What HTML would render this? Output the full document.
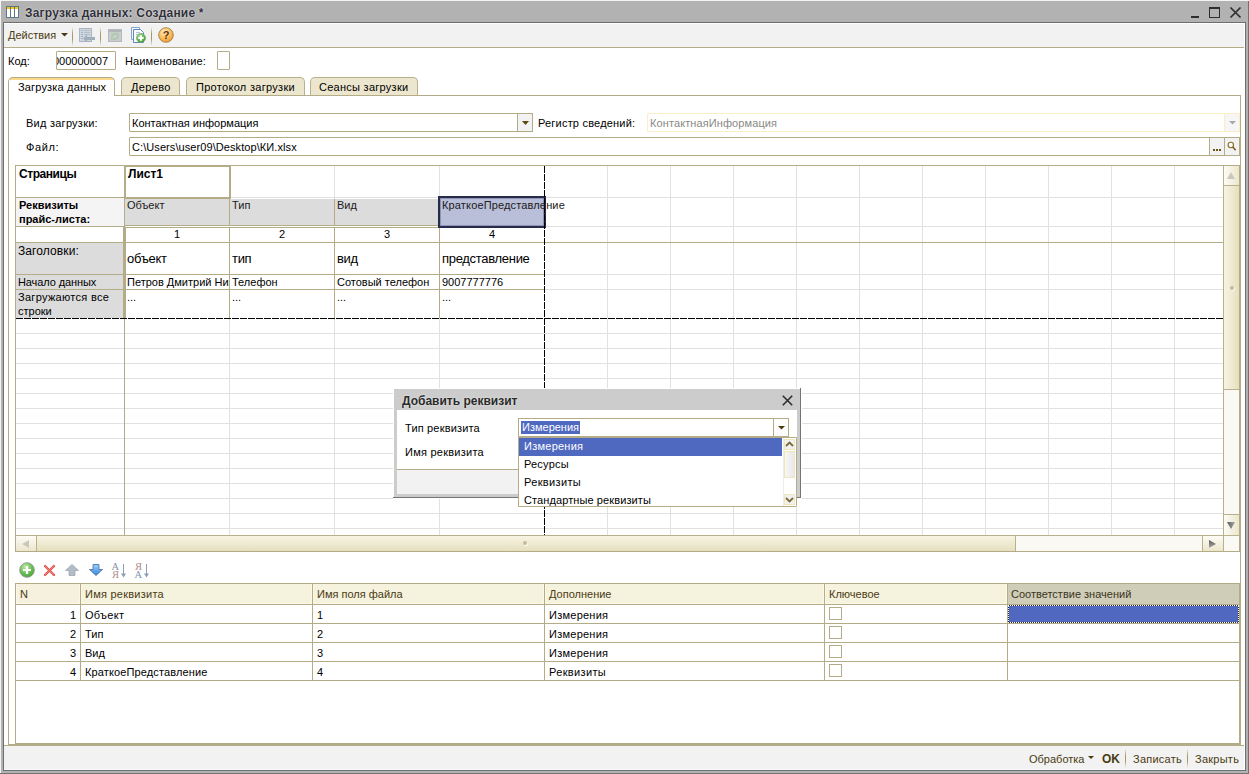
<!DOCTYPE html>
<html lang="ru"><head><meta charset="utf-8"><title>Загрузка данных: Создание *</title>
<style>
html,body{margin:0;padding:0}
body{width:1249px;height:774px;position:relative;overflow:hidden;background:#b2b2b2;font:11px "Liberation Sans",sans-serif;color:#000}
.a{position:absolute;box-sizing:border-box}
.t{position:absolute;white-space:nowrap;line-height:13px;height:13px}
.b{font-weight:bold}
.in{position:absolute;box-sizing:border-box;border:1px solid #b3ac86;background:#fff;border-radius:1px}
.br{color:#4a3a10}
.hl{position:absolute;height:1px;background:#e1e1e1}
.vl{position:absolute;width:1px;background:#e1e1e1}
.bg{background:#b3ac86}
</style></head><body>
<!-- window frame -->
<div class="a" style="left:0;top:0;width:1249px;height:1px;background:#f4f4f4"></div>
<div class="a" style="left:0;top:0;width:1px;height:773px;background:#f4f4f4"></div>
<div class="a" style="left:1248px;top:1px;width:1px;height:773px;background:#727272"></div>
<div class="a" style="left:0;top:773px;width:1249px;height:1px;background:#727272"></div>
<div class="a" style="left:3px;top:22px;width:1243px;height:749px;background:#6e6e6e"></div>
<!-- client area -->
<div class="a" id="client" style="left:4px;top:23px;width:1241px;height:747px;background:#fff"></div>
<!-- title -->
<svg class="a" style="left:6px;top:6px" width="14" height="12" viewBox="0 0 14 12"><g fill="#fff" stroke="#5f7686" stroke-width="1"><rect x=".5" y=".5" width="4" height="11"/><rect x="4.5" y=".5" width="4" height="11"/><rect x="8.5" y=".5" width="4" height="11"/></g><g fill="#f5c518"><rect x="1" y="1" width="3" height="2"/><rect x="5" y="1" width="3" height="2"/><rect x="9" y="1" width="3" height="2"/></g></svg>
<div class="t b" style="left:25px;top:6px;font-size:12px;line-height:14px;height:14px;color:#30303a;letter-spacing:.2px;text-shadow:0 0 2px #e4e4e4,0 0 1px #e4e4e4">Загрузка данных: Создание *</div>
<div class="a" style="left:1191px;top:16px;width:8px;height:2px;background:#2e2e2e"></div>
<div class="a" style="left:1209px;top:7px;width:11px;height:11px;border:1px solid #2e2e2e;border-top-width:2px"></div>
<svg class="a" style="left:1229px;top:6px" width="13" height="13" viewBox="0 0 13 13"><path d="M1.5 1.5 L11.5 11.5 M11.5 1.5 L1.5 11.5" stroke="#2e2e2e" stroke-width="1.7" fill="none"/></svg>
<!-- toolbar -->
<div class="a" style="left:4px;top:23px;width:1240px;height:24px;background:#f2f2f2;border-top:1px solid #fff"></div>
<div class="a bg" style="left:4px;top:47px;width:1240px;height:1px"></div>
<div class="t br" style="left:8px;top:29px">Действия</div>
<svg class="a" style="left:61px;top:33px" width="7" height="4"><path d="M0 0h7L3.5 3.6z" fill="#4a3a10"/></svg>
<div class="a" style="left:72px;top:27px;width:1px;height:19px;background:linear-gradient(#f2f2f200,#a89a62 35%,#a89a62 65%,#f2f2f200)"></div>
<div class="a" style="left:100px;top:27px;width:1px;height:19px;background:linear-gradient(#f2f2f200,#a89a62 35%,#a89a62 65%,#f2f2f200)"></div>
<div class="a" style="left:151px;top:27px;width:1px;height:19px;background:linear-gradient(#f2f2f200,#a89a62 35%,#a89a62 65%,#f2f2f200)"></div>
<!-- icon1 -->
<svg class="a" style="left:79px;top:28px" width="17" height="15" viewBox="0 0 17 15"><rect x=".5" y=".5" width="12" height="13" fill="#cfd6dd" stroke="#aab5c0"/><path d="M2 2.5h2M2 4.5h2M2 6.5h2M2 8.5h2M2 10.5h2" stroke="#9fb6cf" stroke-width="1"/><path d="M5 2.5h6M5 4.5h6M5 6.5h6" stroke="#b4bec8" stroke-width="1"/><path d="M4 10.5l4-3.8v2.4h8v2.8H8v2.4z" fill="#a0aebb"/></svg>
<!-- icon2 -->
<svg class="a" style="left:108px;top:29px" width="15" height="13" viewBox="0 0 15 13"><rect x=".5" y=".5" width="13" height="12" fill="#cacdce" stroke="#b4b9bc"/><rect x="1" y="1" width="12" height="2" fill="#b0b5b9"/><path d="M4 8a3 3 0 0 1 5-2.4M10 7a3 3 0 0 1-5 2.4" fill="none" stroke="#a9c6a2" stroke-width="1.5"/><path d="M8.5 4.5h2.5v2.5zM5.5 10.5H3V8z" fill="#a9c6a2"/></svg>
<!-- icon3 -->
<svg class="a" style="left:130px;top:26px" width="17" height="18" viewBox="0 0 17 18"><defs><radialGradient id="g3" cx=".35" cy=".3" r=".8"><stop offset="0" stop-color="#a4e090"/><stop offset=".6" stop-color="#5cba48"/><stop offset="1" stop-color="#3c962e"/></radialGradient></defs><path d="M1.5 1.5h8v12h-8z" fill="#f4f8fc" stroke="#86a6cc"/><path d="M3.5 3.5h7l3 3v10h-10z" fill="#fbfdff" stroke="#5f88b8"/><path d="M6 6.5h4M6 8.5h3" stroke="#b8c4d0"/><circle cx="11" cy="12" r="4.5" fill="url(#g3)" stroke="#7f9a7a" stroke-width=".7"/><path d="M11 9.3v5.4M8.3 12h5.4" stroke="#fff" stroke-width="1.9"/></svg>
<!-- icon4 -->
<svg class="a" style="left:158px;top:27px" width="16" height="16" viewBox="0 0 16 16"><defs><radialGradient id="hg" cx=".4" cy=".3" r=".8"><stop offset="0" stop-color="#ffebbf"/><stop offset=".55" stop-color="#fbbd58"/><stop offset="1" stop-color="#e8922a"/></radialGradient></defs><circle cx="8" cy="8" r="7.3" fill="url(#hg)" stroke="#a87c48" stroke-width=".9"/><text x="8" y="12" text-anchor="middle" font-family="Liberation Sans, sans-serif" font-weight="bold" font-size="11" fill="#5e3210">?</text></svg>
<!-- code row -->
<div class="t" style="left:8px;top:55px">Код:</div>
<div class="in" style="left:56px;top:51px;width:60px;height:19px;overflow:hidden"><div class="t" style="right:7px;top:3px">000000007</div></div>
<div class="t" style="left:125px;top:55px;letter-spacing:0.12px">Наименование:</div>
<div class="in" style="left:217px;top:51px;width:13px;height:19px"></div>
<!-- tabs -->
<div class="a" style="left:8px;top:95px;width:1233px;height:650px;border:1px solid #b3ac86;background:#fff"></div>
<div class="a" style="left:121px;top:77px;width:59px;height:19px;border:1px solid #b9b18c;border-bottom:1px solid #b3ac86;border-radius:5px 5px 0 0;background:#ece6cf"></div>
<div class="a" style="left:186px;top:77px;width:119px;height:19px;border:1px solid #b9b18c;border-bottom:1px solid #b3ac86;border-radius:5px 5px 0 0;background:#ece6cf"></div>
<div class="a" style="left:310px;top:77px;width:108px;height:19px;border:1px solid #b9b18c;border-bottom:1px solid #b3ac86;border-radius:5px 5px 0 0;background:#ece6cf"></div>
<div class="a" style="left:8px;top:77px;width:107px;height:19px;border:1px solid #b3ac86;border-bottom:none;border-radius:5px 5px 0 0;background:linear-gradient(#fbd98a 0 2px,#fff 2px);overflow:hidden"></div>
<div class="t" style="left:18px;top:81px;letter-spacing:0.17px">Загрузка данных</div>
<div class="t" style="left:131px;top:81px;letter-spacing:0.35px">Дерево</div>
<div class="t" style="left:196px;top:81px;letter-spacing:0.3px">Протокол загрузки</div>
<div class="t" style="left:319px;top:81px;letter-spacing:0.27px">Сеансы загрузки</div>
<!-- fields -->
<div class="t" style="left:26px;top:117px;letter-spacing:0.25px">Вид загрузки:</div>
<div class="in" style="left:129px;top:113px;width:404px;height:19px"></div>
<div class="t" style="left:132px;top:117px">Контактная информация</div>
<div class="a" style="left:517px;top:113px;width:16px;height:19px;border:1px solid #b3ac86;background:#f2f2f2"></div>
<svg class="a" style="left:522px;top:121px" width="7" height="4"><path d="M0 0h7L3.5 4z" fill="#5e4a12"/></svg>
<div class="t" style="left:538px;top:117px;letter-spacing:0.2px">Регистр сведений:</div>
<div class="in" style="left:647px;top:113px;width:593px;height:19px;border-color:#fbeec4"></div>
<div class="t" style="left:650px;top:117px;color:#8a8a84;letter-spacing:0.1px">КонтактнаяИнформация</div>
<div class="a" style="left:1224px;top:113px;width:16px;height:19px;border:1px solid #fbeec4;background:#f6f6f6"></div>
<svg class="a" style="left:1229px;top:121px" width="7" height="4"><path d="M0 0h7L3.5 3.6z" fill="#a8a8a8"/></svg>
<div class="t" style="left:26px;top:141px;letter-spacing:0.6px">Файл:</div>
<div class="in" style="left:129px;top:137px;width:1111px;height:19px"></div>
<div class="t" style="left:132px;top:141px;letter-spacing:0.08px">C:\Users\user09\Desktop\КИ.xlsx</div>
<div class="a" style="left:1209px;top:137px;width:16px;height:19px;border:1px solid #b3ac86;background:#f2f2f2"></div>
<div class="t br" style="left:1213px;top:141px;width:9px;overflow:hidden;color:transparent;background:linear-gradient(90deg,#6a5416 0 2px,transparent 2px 3px,#6a5416 3px 5px,transparent 5px 6px,#6a5416 6px 8px,transparent 8px) 0 8px/9px 2px no-repeat">...</div>
<div class="a" style="left:1224px;top:137px;width:16px;height:19px;border:1px solid #b3ac86;background:#f2f2f2"></div>
<svg class="a" style="left:1227px;top:141px" width="11" height="11" viewBox="0 0 11 11"><circle cx="3.8" cy="4" r="2.7" fill="#fdfdfd" stroke="#8a6d2a" stroke-width="1.1"/><path d="M5.8 6L8.6 9.2" stroke="#7a5c1c" stroke-width="1.6"/></svg>
<div class="a" style="left:15px;top:165px;width:1225px;height:387px;border:1px solid #b3ac86;background:#fff"></div>
<div class="hl" style="left:16px;top:197px;width:1208px"></div>
<div class="hl" style="left:16px;top:226px;width:1208px"></div>
<div class="hl" style="left:16px;top:274px;width:1208px"></div>
<div class="hl" style="left:16px;top:289px;width:1208px"></div>
<div class="hl" style="left:16px;top:333px;width:1208px"></div>
<div class="hl" style="left:16px;top:348px;width:1208px"></div>
<div class="hl" style="left:16px;top:363px;width:1208px"></div>
<div class="hl" style="left:16px;top:378px;width:1208px"></div>
<div class="hl" style="left:16px;top:393px;width:1208px"></div>
<div class="hl" style="left:16px;top:408px;width:1208px"></div>
<div class="hl" style="left:16px;top:423px;width:1208px"></div>
<div class="hl" style="left:16px;top:438px;width:1208px"></div>
<div class="hl" style="left:16px;top:453px;width:1208px"></div>
<div class="hl" style="left:16px;top:468px;width:1208px"></div>
<div class="hl" style="left:16px;top:483px;width:1208px"></div>
<div class="hl" style="left:16px;top:498px;width:1208px"></div>
<div class="hl" style="left:16px;top:513px;width:1208px"></div>
<div class="hl" style="left:16px;top:528px;width:1208px"></div>
<div class="vl" style="left:229px;top:166px;height:369px"></div>
<div class="vl" style="left:334px;top:166px;height:369px"></div>
<div class="vl" style="left:439px;top:166px;height:369px"></div>
<div class="vl" style="left:607px;top:166px;height:369px"></div>
<div class="vl" style="left:670px;top:166px;height:369px"></div>
<div class="vl" style="left:733px;top:166px;height:369px"></div>
<div class="vl" style="left:796px;top:166px;height:369px"></div>
<div class="vl" style="left:859px;top:166px;height:369px"></div>
<div class="vl" style="left:922px;top:166px;height:369px"></div>
<div class="vl" style="left:985px;top:166px;height:369px"></div>
<div class="vl" style="left:1048px;top:166px;height:369px"></div>
<div class="vl" style="left:1111px;top:166px;height:369px"></div>
<div class="vl" style="left:1174px;top:166px;height:369px"></div>
<div class="a" style="left:16px;top:198px;width:108px;height:28px;background:#f4f4f4"></div>
<div class="a" style="left:16px;top:243px;width:108px;height:31px;background:#dcdcdc"></div>
<div class="a" style="left:16px;top:275px;width:108px;height:14px;background:#dcdcdc"></div>
<div class="a" style="left:16px;top:290px;width:108px;height:28px;background:#dcdcdc"></div>
<div class="a" style="left:16px;top:197px;width:108px;height:1px;background:#b3ac86"></div>
<div class="a" style="left:16px;top:226px;width:108px;height:1px;background:#b3ac86"></div>
<div class="a" style="left:16px;top:242px;width:108px;height:1px;background:#b3ac86"></div>
<div class="a" style="left:16px;top:274px;width:108px;height:1px;background:#b3ac86"></div>
<div class="a" style="left:16px;top:289px;width:108px;height:1px;background:#b3ac86"></div>
<div class="a" style="left:125px;top:199px;width:419px;height:26px;background:#dcdcdc"></div>
<div class="a" style="left:124px;top:225px;width:420px;height:1px;background:#b3ac86"></div>
<div class="a" style="left:124px;top:227px;width:420px;height:1px;background:#b3ac86"></div>
<div class="a" style="left:124px;top:274px;width:420px;height:1px;background:#b3ac86"></div>
<div class="a" style="left:124px;top:289px;width:420px;height:1px;background:#b3ac86"></div>
<div class="a" style="left:16px;top:242px;width:1208px;height:1px;background:#b3ac86"></div>
<div class="a" style="left:229px;top:199px;width:1px;height:119px;background:#b3ac86"></div>
<div class="a" style="left:334px;top:199px;width:1px;height:119px;background:#b3ac86"></div>
<div class="a" style="left:439px;top:199px;width:1px;height:119px;background:#b3ac86"></div>
<div class="a" style="left:126px;top:226px;width:418px;height:1px;background:#fff"></div>
<div class="a" style="left:124px;top:166px;width:1px;height:369px;background:#b3ac86"></div>
<div class="a" style="left:123px;top:227px;width:3px;height:91px;background:#b3ac86"></div>
<div class="a" style="left:124px;top:165px;width:107px;height:34px;border:2px solid #b3ac86;background:#fff"></div>
<div class="a" style="left:438px;top:196px;width:108px;height:32px;border:2px solid #262c4a;background:#b9bed9;box-shadow:inset 0 0 0 1px #8d93b0"></div>
<div class="a" style="left:16px;top:318px;width:1208px;height:1px;background:repeating-linear-gradient(90deg,#000 0 7px,transparent 7px 8px)"></div>
<div class="a" style="left:544px;top:166px;width:1px;height:369px;background:repeating-linear-gradient(180deg,#000 0 7px,transparent 7px 8px)"></div>
<div class="t b" style="left:19px;top:167px;font-size:12px;line-height:14px;height:14px;letter-spacing:-.45px">Страницы</div>
<div class="t b" style="left:128px;top:167px;font-size:12px;line-height:14px;height:14px">Лист1</div>
<div class="t b" style="left:19px;top:199px;letter-spacing:0">Реквизиты</div>
<div class="t b" style="left:19px;top:213px;">прайс-листа:</div>
<div class="t" style="left:127px;top:199px;color:#202020;letter-spacing:0">Объект</div>
<div class="t" style="left:232px;top:199px;color:#202020;letter-spacing:0">Тип</div>
<div class="t" style="left:337px;top:199px;color:#202020;letter-spacing:0">Вид</div>
<div class="t" style="left:442px;top:199px;color:#202020;letter-spacing:.15px">КраткоеПредставление</div>
<div class="t" style="left:125px;top:228px;width:104px;text-align:center">1</div>
<div class="t" style="left:230px;top:228px;width:104px;text-align:center">2</div>
<div class="t" style="left:335px;top:228px;width:104px;text-align:center">3</div>
<div class="t" style="left:440px;top:228px;width:104px;text-align:center">4</div>
<div class="t" style="left:18px;top:244px;font-size:12px;line-height:14px;height:14px;letter-spacing:.1px">Заголовки:</div>
<div class="t" style="left:127px;top:251px;font-size:13px;line-height:15px;height:15px;letter-spacing:-.3px">объект</div>
<div class="t" style="left:232px;top:251px;font-size:13px;line-height:15px;height:15px;letter-spacing:-.3px">тип</div>
<div class="t" style="left:337px;top:251px;font-size:13px;line-height:15px;height:15px;letter-spacing:-.3px">вид</div>
<div class="t" style="left:442px;top:251px;font-size:13px;line-height:15px;height:15px;letter-spacing:-.3px">представление</div>
<div class="t" style="left:18px;top:276px;letter-spacing:-.1px">Начало данных</div>
<div class="t" style="left:127px;top:276px;width:102px;overflow:hidden">Петров Дмитрий Николаевич</div>
<div class="t" style="left:232px;top:276px;width:102px;overflow:hidden">Телефон</div>
<div class="t" style="left:337px;top:276px;width:102px;overflow:hidden">Сотовый телефон</div>
<div class="t" style="left:442px;top:276px;width:102px;overflow:hidden">9007777776</div>
<div class="t" style="left:18px;top:291px;letter-spacing:.3px">Загружаются все</div>
<div class="t" style="left:18px;top:305px;">строки</div>
<div class="t" style="left:127px;top:291px;">...</div>
<div class="t" style="left:232px;top:291px;">...</div>
<div class="t" style="left:337px;top:291px;">...</div>
<div class="t" style="left:442px;top:291px;">...</div>
<div class="a" style="left:1223px;top:166px;width:16px;height:369px;background:#faf9f4;border-left:1px solid #b9b18c"></div>
<div class="a" style="left:1224px;top:166px;width:15px;height:20px;background:linear-gradient(90deg,#fdfcf6,#ece6cc);border-bottom:1px solid #b9b18c"></div>
<div class="a" style="left:1224px;top:186px;width:15px;height:204px;background:linear-gradient(90deg,#f7f4e4,#e6dfbe);border-bottom:1px solid #b9b18c"></div>
<div class="a" style="left:1224px;top:514px;width:15px;height:21px;background:linear-gradient(90deg,#fdfcf6,#ece6cc);border-top:1px solid #b9b18c"></div>
<svg class="a" style="left:1227px;top:172px" width="8" height="7"><path d="M4 0L8 7H0z" fill="#c9c8c0"/></svg>
<svg class="a" style="left:1227px;top:522px" width="8" height="7"><defs><linearGradient id="tg1" x1="0" x2="1"><stop offset="0" stop-color="#5a5a5a"/><stop offset="1" stop-color="#a8a8a8"/></linearGradient></defs><path d="M0 0h8L4 7z" fill="url(#tg1)"/></svg>
<div class="a" style="left:16px;top:535px;width:1223px;height:16px;background:#faf9f4;border-top:1px solid #b9b18c"></div>
<div class="a" style="left:16px;top:536px;width:21px;height:15px;border-right:1px solid #b9b18c;background:linear-gradient(180deg,#fdfcf6,#ece6cc)"></div>
<div class="a" style="left:37px;top:536px;width:979px;height:15px;background:linear-gradient(180deg,#f7f4e4,#e6dfbe);border-right:1px solid #b9b18c"></div>
<div class="a" style="left:1202px;top:536px;width:22px;height:15px;background:linear-gradient(180deg,#fdfcf6,#ece6cc);border-left:1px solid #b9b18c;border-right:1px solid #b9b18c"></div>
<svg class="a" style="left:22px;top:540px" width="7" height="8"><path d="M7 0v8L0 4z" fill="#c9c8c0"/></svg>
<svg class="a" style="left:1209px;top:540px" width="7" height="8"><defs><linearGradient id="tg2" x1="0" x2="0" y1="0" y2="1"><stop offset="0" stop-color="#5a5a5a"/><stop offset="1" stop-color="#a8a8a8"/></linearGradient></defs><path d="M0 0v8L7 4z" fill="url(#tg2)"/></svg>
<div class="a" style="left:523px;top:541px;width:4px;height:4px;border-radius:2px;background:#c4bc9c;box-shadow:1px 1px 0 #fbf9ee"></div>
<div class="a" style="left:1230px;top:286px;width:4px;height:4px;border-radius:2px;background:#c4bc9c;box-shadow:1px 1px 0 #fbf9ee"></div>
<svg class="a" style="left:19px;top:562px" width="16" height="16" viewBox="0 0 16 16"><defs><radialGradient id="gp" cx=".4" cy=".3" r=".8"><stop offset="0" stop-color="#c4eaae"/><stop offset=".55" stop-color="#68bf52"/><stop offset="1" stop-color="#4a9a3c"/></radialGradient></defs><circle cx="8" cy="8" r="7.3" fill="url(#gp)" stroke="#8a9a84" stroke-width=".9"/><path d="M8 4v8M4 8h8" stroke="#fff" stroke-width="2.2"/></svg>
<svg class="a" style="left:43px;top:564px" width="13" height="13" viewBox="0 0 13 13"><path d="M2 2L11 11M11 2L2 11" stroke="#e2504a" stroke-width="2.4" stroke-linecap="round"/><path d="M2 2L11 11M11 2L2 11" stroke="#f08078" stroke-width="1" stroke-linecap="round"/></svg>
<svg class="a" style="left:65px;top:564px" width="14" height="12" viewBox="0 0 14 12"><path d="M7 .5L13.5 6.5H10V11.5H4V6.5H.5z" fill="#b4bcc6" stroke="#a0a8b2" stroke-width=".8"/></svg>
<svg class="a" style="left:89px;top:564px" width="14" height="12" viewBox="0 0 14 12"><defs><linearGradient id="bd" x1="0" y1="0" x2="0" y2="1"><stop offset="0" stop-color="#9cd0f8"/><stop offset="1" stop-color="#3a84d8"/></linearGradient></defs><path d="M4 .5H10V5.5H13.5L7 11.5L.5 5.5H4z" fill="url(#bd)" stroke="#3a6cb0" stroke-width=".8"/></svg>
<svg class="a" style="left:111px;top:561px" width="17" height="18" viewBox="0 0 17 18"><text x="0.5" y="8.5" font-family="Liberation Serif, serif" font-size="10.5" fill="#7f94ab">А</text><text x="1" y="17" font-family="Liberation Serif, serif" font-size="10.5" fill="#ab8c8c">Я</text><path d="M12.5 3v11" stroke="#8a9db2" stroke-width="1"/><path d="M10 12.5h5l-2.5 4z" fill="#8a9db2"/></svg>
<svg class="a" style="left:134px;top:561px" width="17" height="18" viewBox="0 0 17 18"><text x="1" y="8.5" font-family="Liberation Serif, serif" font-size="10.5" fill="#ab8c8c">Я</text><text x="0.5" y="17" font-family="Liberation Serif, serif" font-size="10.5" fill="#7f94ab">А</text><path d="M12.5 3v11" stroke="#8a9db2" stroke-width="1"/><path d="M10 12.5h5l-2.5 4z" fill="#8a9db2"/></svg>
<div class="a" style="left:15px;top:583px;width:1225px;height:161px;border:1px solid #b3ac86;background:#fff"></div>
<div class="a" style="left:16px;top:584px;width:64px;height:20px;background:#f6f0de;box-shadow:inset 1px 0 #fbf8e8,inset -1px 0 #fbf8e8,inset 0 -1px #fbf8e8"></div>
<div class="a" style="left:81px;top:584px;width:231px;height:20px;background:#f5f2de;box-shadow:inset 1px 0 #fbf8e8,inset -1px 0 #fbf8e8,inset 0 -1px #fbf8e8"></div>
<div class="a" style="left:313px;top:584px;width:231px;height:20px;background:#f5f2de;box-shadow:inset 1px 0 #fbf8e8,inset -1px 0 #fbf8e8,inset 0 -1px #fbf8e8"></div>
<div class="a" style="left:545px;top:584px;width:279px;height:20px;background:#f5f2de;box-shadow:inset 1px 0 #fbf8e8,inset -1px 0 #fbf8e8,inset 0 -1px #fbf8e8"></div>
<div class="a" style="left:825px;top:584px;width:182px;height:20px;background:#f5f2de;box-shadow:inset 1px 0 #fbf8e8,inset -1px 0 #fbf8e8,inset 0 -1px #fbf8e8"></div>
<div class="a" style="left:1008px;top:584px;width:231px;height:20px;background:#cfcdb8"></div>
<div class="a" style="left:16px;top:604px;width:1223px;height:1px;background:#b3ac86"></div>
<div class="a" style="left:16px;top:623px;width:1223px;height:1px;background:#b3ac86"></div>
<div class="a" style="left:16px;top:642px;width:1223px;height:1px;background:#b3ac86"></div>
<div class="a" style="left:16px;top:661px;width:1223px;height:1px;background:#b3ac86"></div>
<div class="a" style="left:16px;top:680px;width:1223px;height:1px;background:#b3ac86"></div>
<div class="a" style="left:80px;top:584px;width:1px;height:97px;background:#b3ac86"></div>
<div class="a" style="left:312px;top:584px;width:1px;height:97px;background:#b3ac86"></div>
<div class="a" style="left:544px;top:584px;width:1px;height:97px;background:#b3ac86"></div>
<div class="a" style="left:824px;top:584px;width:1px;height:97px;background:#b3ac86"></div>
<div class="a" style="left:1007px;top:584px;width:1px;height:97px;background:#b3ac86"></div>
<div class="t" style="left:20px;top:588px;color:#4a3a12">N</div>
<div class="t" style="left:85px;top:588px;color:#4a3a12;letter-spacing:0.25px">Имя реквизита</div>
<div class="t" style="left:317px;top:588px;color:#4a3a12">Имя поля файла</div>
<div class="t" style="left:549px;top:588px;color:#4a3a12">Дополнение</div>
<div class="t" style="left:829px;top:588px;color:#4a3a12">Ключевое</div>
<div class="t" style="left:1011px;top:588px;color:#3a3420">Соответствие значений</div>
<div class="t" style="left:16px;top:609px;width:60px;text-align:right">1</div>
<div class="t" style="left:85px;top:609px;letter-spacing:0.3px">Объект</div>
<div class="t" style="left:317px;top:609px;">1</div>
<div class="t" style="left:549px;top:609px;letter-spacing:0.25px">Измерения</div>
<div class="a" style="left:829px;top:607px;width:13px;height:13px;border:1px solid #b3ac86;background:#fff"></div>
<div class="t" style="left:16px;top:628px;width:60px;text-align:right">2</div>
<div class="t" style="left:85px;top:628px;">Тип</div>
<div class="t" style="left:317px;top:628px;">2</div>
<div class="t" style="left:549px;top:628px;letter-spacing:0.25px">Измерения</div>
<div class="a" style="left:829px;top:626px;width:13px;height:13px;border:1px solid #b3ac86;background:#fff"></div>
<div class="t" style="left:16px;top:647px;width:60px;text-align:right">3</div>
<div class="t" style="left:85px;top:647px;">Вид</div>
<div class="t" style="left:317px;top:647px;">3</div>
<div class="t" style="left:549px;top:647px;letter-spacing:0.25px">Измерения</div>
<div class="a" style="left:829px;top:645px;width:13px;height:13px;border:1px solid #b3ac86;background:#fff"></div>
<div class="t" style="left:16px;top:666px;width:60px;text-align:right">4</div>
<div class="t" style="left:85px;top:666px;letter-spacing:0.13px">КраткоеПредставление</div>
<div class="t" style="left:317px;top:666px;">4</div>
<div class="t" style="left:549px;top:666px;letter-spacing:0.35px">Реквизиты</div>
<div class="a" style="left:829px;top:664px;width:13px;height:13px;border:1px solid #b3ac86;background:#fff"></div>
<div class="a" style="left:1008px;top:605px;width:231px;height:18px;background:#2a2a2a"></div>
<div class="a" style="left:1009px;top:606px;width:229px;height:16px;background:#5068c0"></div>
<div class="a" style="left:1008px;top:605px;width:231px;height:18px;border:1px dotted #fff"></div>
<div class="a" style="left:393px;top:388px;width:409px;height:111px;background:#fff"></div>
<div class="a" style="left:394px;top:389px;width:407px;height:109px;background:#cccccc;border-right:1px solid #757575;border-bottom:1px solid #757575"></div>
<div class="a" style="left:393px;top:497px;width:1px;height:1px;background:#757575"></div>
<div class="a" style="left:800px;top:388px;width:1px;height:1px;background:#757575"></div>
<div class="a" style="left:397px;top:410px;width:400px;height:59px;background:#fff"></div>
<div class="a" style="left:397px;top:469px;width:400px;height:25px;background:#f2f2f2;border-top:1px solid #b3ac86"></div>
<div class="t b" style="left:402px;top:394px;font-size:12px;line-height:14px;height:14px;color:#2a2a2a;text-shadow:0 0 2px #f4f4f4">Добавить реквизит</div>
<svg class="a" style="left:782px;top:395px" width="11" height="11" viewBox="0 0 11 11"><path d="M.8 .8L10.2 10.2M10.2 .8L.8 10.2" stroke="#2e2e2e" stroke-width="1.6"/></svg>
<div class="t" style="left:405px;top:422px;letter-spacing:0.17px">Тип реквизита</div>
<div class="t" style="left:405px;top:446px;letter-spacing:0.25px">Имя реквизита</div>
<div class="a" style="left:518px;top:418px;width:271px;height:19px;border:1px solid #b3ac86;background:#fff"></div>
<div class="t" style="left:521px;top:421px;color:#fff;background:#4f68c0;padding:0 1px 0 1px;letter-spacing:0">Измерения</div>
<div class="a" style="left:773px;top:418px;width:16px;height:19px;border:1px solid #b3ac86;background:#fdfdfd"></div>
<svg class="a" style="left:778px;top:426px" width="7" height="4"><path d="M0 0h7L3.5 3.6z" fill="#4a3a10"/></svg>
<div class="a" style="left:518px;top:437px;width:279px;height:70px;border:1px solid #b3ac86;background:#fff;overflow:hidden;border-radius:0 0 2px 0"></div>
<div class="a" style="left:519px;top:438px;width:263px;height:18px;background:#4f68c0"></div>
<div class="t" style="left:524px;top:440px;color:#fff;letter-spacing:0.25px">Измерения</div>
<div class="t" style="left:524px;top:458px;letter-spacing:0.2px">Ресурсы</div>
<div class="t" style="left:524px;top:476px;letter-spacing:0.35px">Реквизиты</div>
<div class="a" style="left:519px;top:492px;width:264px;height:14px;overflow:hidden"><div class="t" style="left:5px;top:2px;letter-spacing:0.1px">Стандартные реквизиты</div></div>
<div class="a" style="left:783px;top:438px;width:13px;height:68px;background:#fff;border-left:1px solid #ececec"></div>
<div class="a" style="left:784px;top:439px;width:11px;height:11px;border:1px solid #f0e6b8;background:#f1f1f1"></div>
<div class="a" style="left:784px;top:494px;width:11px;height:11px;border:1px solid #f0e6b8;background:#f1f1f1"></div>
<div class="a" style="left:784px;top:451px;width:11px;height:27px;border:1px solid #f0e6b8;background:linear-gradient(90deg,#f6f6f6,#e9e9e9)"></div>
<svg class="a" style="left:785px;top:441px" width="9" height="6"><path d="M1 5L4.5 1.5L8 5" stroke="#7a6a38" stroke-width="1.8" fill="none"/></svg>
<svg class="a" style="left:785px;top:497px" width="9" height="6"><path d="M1 1L4.5 4.5L8 1" stroke="#7a6a38" stroke-width="1.8" fill="none"/></svg>
<!-- bottom bar -->
<div class="a" style="left:4px;top:745px;width:1240px;height:25px;background:#f2f2f2;border-top:1px solid #b3ac86;border-bottom:1px solid #fbfbfb"></div>
<div class="t br" style="left:1029px;top:753px">Обработка</div>
<svg class="a" style="left:1088px;top:756px" width="6" height="3"><path d="M0 0h6L3 3z" fill="#4a3a10"/></svg>
<div class="t br b" style="left:1102px;top:752px;font-size:12px;line-height:14px;height:14px">OK</div>
<div class="a" style="left:1125px;top:749px;width:1px;height:19px;background:linear-gradient(#f2f2f200,#a89a62 35%,#a89a62 65%,#f2f2f200)"></div>
<div class="t br" style="left:1133px;top:753px;letter-spacing:.25px">Записать</div>
<div class="a" style="left:1187px;top:749px;width:1px;height:19px;background:linear-gradient(#f2f2f200,#a89a62 35%,#a89a62 65%,#f2f2f200)"></div>
<div class="t br" style="left:1195px;top:753px;letter-spacing:.25px">Закрыть</div>
</body></html>
